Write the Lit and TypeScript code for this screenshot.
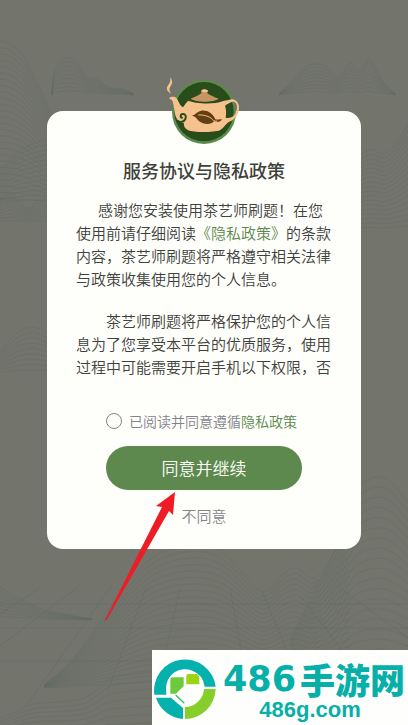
import { LitElement, html, css, svg } from "lit";
import { customElement, state } from "lit/decorators.js";

type Point = [number, number];

interface Range {
  ridge: Point[];
  base: number;
  lines: number;
}

const RANGES: Range[] = [
  { ridge: [[-40, 60], [-15, 45], [5, 42], [22, 55], [37, 82], [48, 106], [60, 140], [70, 190]], base: 205, lines: 26 },
  { ridge: [[-10, 185], [0, 170], [15, 154], [30, 145], [50, 140], [70, 150]], base: 205, lines: 13 },
  { ridge: [[-10, 212], [0, 200], [11, 193], [22, 204], [30, 208], [38, 200], [50, 206]], base: 224, lines: 9 },
  { ridge: [[52, 94], [54, 72], [62, 60], [70, 58], [78, 63], [88, 79], [96, 78], [108, 87], [122, 89], [134, 94]], base: 95, lines: 9 },
  { ridge: [[279, 94], [293, 80], [306, 67], [318, 64], [328, 68], [337, 77], [343, 72], [350, 63], [358, 70], [364, 65], [369, 58], [376, 69], [383, 82], [396, 94]], base: 95, lines: 9 },
  { ridge: [[355, 162], [363, 153], [373, 150], [384, 154], [394, 146], [402, 134], [412, 118]], base: 232, lines: 18 },
  { ridge: [[-10, 362], [0, 352], [16, 334], [32, 327], [48, 334], [64, 350]], base: 375, lines: 9 },
  { ridge: [[-10, 580], [0, 587], [22, 600], [50, 611], [92, 619]], base: 620, lines: 9 },
  { ridge: [[44, 685], [70, 662], [100, 622], [126, 585], [148, 561], [170, 549], [196, 545], [220, 551], [240, 570], [258, 590], [270, 589], [284, 573], [297, 568], [310, 578], [322, 572], [336, 550], [350, 535]], base: 688, lines: 22 },
  { ridge: [[290, 640], [315, 590], [335, 550], [350, 500], [362, 483], [378, 477], [392, 483], [412, 508]], base: 700, lines: 22 },
  { ridge: [[-10, 722], [10, 714], [34, 704], [60, 702], [82, 699], [96, 690], [112, 678], [152, 672]], base: 740, lines: 8 },
];

const GROUND: [number, number, number, number][] = [
  [0, 604, 408, 604],
  [0, 628, 408, 628],
  [0, 661, 152, 661],
  [40, 588, 0, 614],
  [78, 587, 0, 646],
  [112, 585, 26, 706],
  [146, 588, 108, 690],
  [180, 588, 166, 650],
  [230, 588, 241, 650],
  [262, 592, 287, 650],
  [300, 596, 342, 650],
  [340, 588, 408, 638],
];

function smooth(points: Point[]): string {
  let d = `M${points[0][0]} ${points[0][1]}`;
  for (let i = 0; i < points.length - 1; i++) {
    const a = points[Math.max(i - 1, 0)];
    const b = points[i];
    const c = points[i + 1];
    const e = points[Math.min(i + 2, points.length - 1)];
    const n = [
      b[0] + (c[0] - a[0]) / 6, b[1] + (c[1] - a[1]) / 6,
      c[0] - (e[0] - b[0]) / 6, c[1] - (e[1] - b[1]) / 6,
      c[0], c[1],
    ].map((v) => v.toFixed(1));
    d += `C${n.join(" ")}`;
  }
  return d;
}

function contours({ ridge, base, lines }: Range): string {
  return Array.from({ length: lines }, (_, i) => {
    const t = 1 - i / lines;
    return smooth(ridge.map(([x, y]) => [x, base - (base - y) * t] as Point));
  }).join("");
}

@customElement("ink-landscape")
export class InkLandscape extends LitElement {
  static styles = css`
    :host { display: block; }
    .scene { display: block; width: 100%; height: 100%; }
    .contour { fill: none; stroke: #5f6b60; stroke-width: 1; opacity: 0.35; }
    .ground { stroke: #626769; stroke-width: 1; opacity: 0.4; }
  `;

  render() {
    return html`
      <svg class="scene" viewBox="0 0 408 725" preserveAspectRatio="xMidYMid slice" aria-hidden="true">
        ${RANGES.map((r) => svg`<path class="contour" d=${contours(r)} />`)}
        ${GROUND.map(([a, b, c, d]) => svg`<line class="ground" x1=${a} y1=${b} x2=${c} y2=${d} />`)}
      </svg>
    `;
  }
}

@customElement("teapot-logo")
export class TeapotLogo extends LitElement {
  static styles = css`
    :host { display: block; }
    svg { display: block; width: 100%; height: 100%; }
  `;

  render() {
    return html`
      <svg viewBox="48 30 228 207" aria-hidden="true">
        <circle cx="162" cy="138" r="96" fill="#5b8a4d" />
        <circle cx="162" cy="137" r="89" fill="#284d1a" />
        <path fill="#f5c28e" d="M60 34C68 42 68 52 62 60C57 68 57 74 63 83C52 78 47 69 53 60C60 50 63 44 60 34Z" />
        <path fill="#f5c28e" fill-rule="evenodd" d="M57 97C63 91 75 91 81 98C86 105 87 115 99 124C103 119 107 110 115 104C130 112 190 117 218 106C226 102 230 104 236 102C250 96 264 104 267 120C269 140 258 158 241 166C229 170 224 184 210 193C190 200 130 200 115 193C104 187 101 181 102 172C92 171 83 165 78 154C72 138 72 112 66 103C63 100 60 99 57 97ZM225 120C231 113 240 110 247 107C256 106 261 114 261 122C261 138 254 149 244 154C238 156 232 156 227 155C229 143 229 130 225 120Z" />
        <path fill="none" stroke="#284d1a" stroke-width="6" stroke-linecap="round" d="M96 155C91 155 90 146 97 144C106 142 110 152 106 159C102 168 91 170 84 165" />
        <path fill="#c79563" d="M122 98C136 92 146 88 155 81C154 79 152 78 154 76C155 71 159 70 164 70C169 70 174 72 174 76C174 79 172 79 171 81C181 88 192 93 206 98C190 110 138 110 122 98Z" />
        <path fill="#f5c28e" d="M154 75C156 69 171 69 174 75C173 79 155 79 154 75Z" />
        <path fill="#623e13" d="M126 149C137 146 140 137 154 134C172 132 188 142 196 160C202 162 209 158 216 160C211 169 200 169 193 165C184 176 165 176 151 168C142 163 139 151 126 149Z" />
        <path fill="none" stroke="#f5c28e" stroke-width="3" d="M145 147C160 146 178 150 188 161C192 166 197 166 201 165" />
      </svg>
    `;
  }
}

@customElement("site-mark")
export class SiteMark extends LitElement {
  static styles = css`
    :host {
      display: flex;
      align-items: center;
      gap: 7px;
      box-sizing: border-box;
      padding: 0 0 0 2px;
      background: #fefefd;
      color: #07afa9;
    }
    .ring { display: block; flex: none; width: 62px; height: 64px; }
    .words { display: flex; flex-direction: column; align-items: center; padding-top: 6px; }
    .name {
      display: flex;
      align-items: center;
      gap: 4px;
      white-space: nowrap;
      line-height: 38px;
    }
    .digits { font-family: "DejaVu Sans", sans-serif; font-size: 35px; font-weight: 700; }
    .han { font-family: "Noto Sans CJK SC", sans-serif; font-size: 35px; font-weight: 900; }
    .domain {
      font: 700 22px/24px "Liberation Sans", sans-serif;
      padding-right: 8px;
    }
  `;

  render() {
    return html`
      <svg class="ring" viewBox="11 30 186 192" aria-hidden="true">
        <path fill="#05b1ad" d="M12 146A92 93 0 1 1 196 122L163 122A58 58 0 0 0 126 74A57 57 0 0 0 47 126L48 146Z" />
        <path fill="#05b1ad" d="M17 155H62L98 186V219A92 93 0 0 1 17 155Z" />
        <path fill="#86cf2b" d="M196 129A92 93 0 0 1 104 219V183A58 58 0 0 0 161 129Z" />
        <path fill="#6bcb3c" d="M67 94H100V120L77 143H60V101Q60 94 67 94Z" />
        <path fill="#9ad317" d="M114 84H140Q147 90 147 97V115H108V91Q108 84 114 84Z" />
        <path fill="none" stroke="#33bb72" stroke-width="4" d="M76 147L102 172" />
      </svg>
      <div class="words">
        <div class="name"><span class="digits">486</span><span class="han">手游网</span></div>
        <div class="domain">486g.com</div>
      </div>
    `;
  }
}

@customElement("app-root")
export class AppRoot extends LitElement {
  @state() private accepted = false;

  static styles = css`
    :host {
      display: block;
      position: relative;
      box-sizing: border-box;
      min-height: 100vh;
      padding: 111px 47px 176px;
      overflow: hidden;
      background: #73746c;
      color: #3f413c;
      font-family: "Noto Sans CJK SC", sans-serif;
      font-weight: 350;
    }
    .backdrop { position: absolute; inset: 0; }
    .dialog {
      position: relative;
      box-sizing: border-box;
      display: flex;
      flex-direction: column;
      padding: 47px 0 22px;
      border-radius: 16px;
      background: #fefffa;
    }
    .logo {
      position: absolute;
      top: -35px;
      left: calc(50% - 38px);
      width: 76px;
      height: 69px;
    }
    .title {
      margin: 0 0 16px;
      text-align: center;
      font-size: 18px;
      font-weight: 500;
      line-height: 24px;
    }
    .terms {
      padding: 0 28px 0 29px;
      font-size: 15px;
      line-height: 23px;
    }
    .para { margin: 0 0 19px; text-indent: 22px; }
    .para:last-child { margin: 0; text-indent: 30px; }
    a { color: #5d874e; text-decoration: none; }
    .actions {
      display: flex;
      flex-direction: column;
      padding: 33px 59px 0;
    }
    .consent {
      display: flex;
      align-items: center;
      gap: 7px;
      margin-bottom: 15px;
      color: #84838b;
      font-size: 14px;
      line-height: 20px;
      white-space: nowrap;
    }
    .tick {
      appearance: none;
      flex: none;
      box-sizing: border-box;
      width: 16px;
      height: 16px;
      margin: 0;
      border: 1px solid #84838b;
      border-radius: 50%;
    }
    .tick:checked { background: #5d874e; border-color: #5d874e; }
    button {
      margin: 0;
      padding: 0;
      border: 0;
      background: none;
      font-family: inherit;
      font-weight: inherit;
      cursor: pointer;
    }
    .accept {
      padding-bottom: 2px;
      height: 44px;
      border-radius: 22px;
      background: #5d884e;
      color: #fefffa;
      font-size: 17px;
    }
    .decline {
      align-self: center;
      margin-top: 15px;
      color: #84838b;
      font-size: 15px;
      line-height: 22px;
    }
    .pointer {
      position: absolute;
      top: 380px;
      left: calc(50% - 100px);
      width: 72px;
      height: 132px;
      pointer-events: none;
    }
    .mark {
      position: absolute;
      right: 0;
      bottom: 0;
      width: 256px;
      height: 75px;
    }
  `;

  private toggle(e: Event) {
    this.accepted = (e.target as HTMLInputElement).checked;
  }

  render() {
    return html`
      <ink-landscape class="backdrop"></ink-landscape>
      <main class="dialog">
        <teapot-logo class="logo"></teapot-logo>
        <h1 class="title">服务协议与隐私政策</h1>
        <div class="terms">
          <p class="para">感谢您安装使用茶艺师刷题！在您使用前请仔细阅读<a href="#privacy">《隐私政策》</a>的条款内容，茶艺师刷题将严格遵守相关法律与政策收集使用您的个人信息。</p>
          <p class="para">茶艺师刷题将严格保护您的个人信息为了您享受本平台的优质服务，使用过程中可能需要开启手机以下权限，否</p>
        </div>
        <div class="actions">
          <div class="consent">
            <input class="tick" id="consent" type="checkbox" .checked=${this.accepted} @change=${this.toggle} />
            <label for="consent">已阅读并同意遵循<a href="#privacy">隐私政策</a></label>
          </div>
          <button class="accept" type="button">同意并继续</button>
          <button class="decline" type="button">不同意</button>
        </div>
        <svg class="pointer" viewBox="0 0 72 132" aria-hidden="true">
          <path fill="#ee1c25" d="M71 1L52 15L58 16L1 129L2 130L65 20L69 24Z" />
        </svg>
      </main>
      <site-mark class="mark"></site-mark>
    `;
  }
}
